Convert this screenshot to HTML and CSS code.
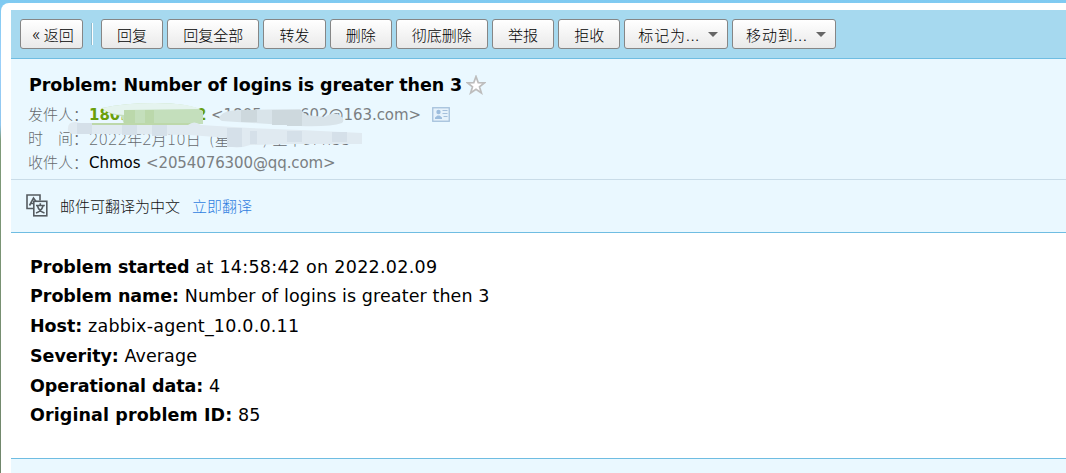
FILE: index.html
```html
<!DOCTYPE html>
<html lang="zh-CN">
<head>
    <meta charset="UTF-8">
    <title>Problem: Number of logins is greater then 3</title>
    <link rel="stylesheet" href="styles.css">
</head>
<body>
<div class="panel">
    <div class="toolbar">
        <a class="btn back"><span class="quote">«</span> 返回</a>
        <span class="line"></span>
        <a class="btn">回复</a>
        <a class="btn wide">回复全部</a>
        <a class="btn">转发</a>
        <a class="btn">删除</a>
        <a class="btn wide">彻底删除</a>
        <a class="btn">举报</a>
        <a class="btn">拒收</a>
        <a class="btn menu">标记为...<i class="arrow"></i></a>
        <a class="btn menu">移动到...<i class="arrow"></i></a>
    </div>

    <div class="info">
        <div class="subject">
            <b class="title">Problem: Number of logins is greater then 3</b>
            <svg class="star" width="20" height="20" viewBox="0 0 20 20">
                <path d="M10 1.5 12.2 7.6 18.6 7.8 13.5 11.7 15.4 18 10 14.3 4.6 18 6.5 11.7 1.4 7.8 7.8 7.6Z" fill="#fff" stroke="#bdbdbd" stroke-width="1.7"/>
            </svg>
        </div>
        <div class="row">
            <span class="label">发件人：</span>
            <b class="phone">180.</b><b class="tail">2</b>
            <span class="mail">&lt;1805</span><span class="mail from-end">602@163.com&gt;</span>
            <svg class="card" width="18" height="15" viewBox="0 0 18 15">
                <rect x=".75" y=".75" width="16.5" height="13.5" fill="#e6f2fb" stroke="#a5c0dc" stroke-width="1.3"/>
                <circle cx="6.5" cy="5" r="2.2" fill="#9dbddd"/>
                <path d="M3 12V10.5L5.5 8.5H7.5L10 10.5V12Z" fill="#9dbddd"/>
                <path d="M10.5 3.5H15.5M10.5 6.5H15.5M11.5 9.5H15.5" stroke="#a5c0dc"/>
            </svg>
        </div>
        <div class="row">
            <span class="label">时　间：</span>
            <span class="date">2022年2月10日</span><span class="week">(星</span><span class="time">) 上午9:4:33</span>
        </div>
        <div class="row">
            <span class="label">收件人：</span>
            <span class="name">Chmos</span>
            <span class="mail to">&lt;2054076300@qq.com&gt;</span>
        </div>
        <svg class="smear" width="360" height="50" viewBox="60 100 360 50">
            <path d="M102 108Q125 103 155 103Q190 103 203 111V124H124L121 116Q105 113 102 108Z" fill="#c4dfbc"/>
            <path d="M102 108Q125 103 155 103Q185 103 201 109L124 110V115Q108 114 102 108Z" fill="#e5f4ef"/>
            <path d="M124 110H135V124H124ZM145 110H154V124H145Z" fill="#bbd8ab"/>
            <path d="M92 123H194V126H92Z" fill="#bdd8aa"/>
            <path d="M68 128Q68 122 75 122L92 125H188Q194 120 201 125L250 128 300 130 362 133V144H285L250 145Q235 150 228 145V138L190 135 120 134 72 134Q67 132 68 128Z" fill="#e0eaf1"/>
            <path d="M77 123H92V134H77ZM122 125H137V135H122ZM152 125H167V136H152ZM227 128H242V147H227ZM250 131H257V144H250ZM287 131H302V142H287ZM332 132H347V142H332Z" fill="#d5e0e9"/>
            <path d="M220 116Q224 110 240 110L300 109 306 115 325 117Q331 112 338 114 346 119 342 123 330 127 300 126L222 121Q218 119 220 116Z" fill="#d9e4ea"/>
            <path d="M241 110H257V122H241ZM272 110H287V125H272ZM287 110H302V126H287Z" fill="#cdd8dd"/>
        </svg>
    </div>

    <div class="translate">
        <svg class="icon" width="22" height="23" viewBox="0 0 22 23" fill="none" stroke="#555b60" stroke-width="1.6">
            <path d="M7.5 14.5H1V1H14V6.5"/>
            <path d="M3.5 11.5 7.5 4 10 7.5M5 9.5H7.5"/>
            <rect x="7.8" y="7.3" width="13" height="14.5"/>
            <path d="M10 11.5H18.8M14.3 9.2V11.5M11.5 12C12.5 15.5 15 17.8 18.5 19M17 12C16 15.5 13.5 17.8 10 19"/>
        </svg>
        <span class="tip">邮件可翻译为中文</span>
        <a class="link">立即翻译</a>
    </div>

    <div class="content">
        <p class="l1"><b>Problem started</b> at 14:58:42 on 2022.02.09</p>
        <p class="l2"><b>Problem name:</b> Number of logins is greater then 3</p>
        <p class="l3"><b>Host:</b> zabbix-agent_10.0.0.11</p>
        <p class="l4"><b>Severity:</b> Average</p>
        <p class="l5"><b>Operational data:</b> 4</p>
        <p class="l6"><b>Original problem ID:</b> 85</p>
    </div>
    <div class="footer"></div>
</div>
</body>
</html>
```
FILE: styles.css
```css
*{padding: 0;margin: 0;box-sizing: border-box;}
body{
    height: 473px;
    padding: 3px 0 0 1px;
    overflow: hidden;
    background: linear-gradient(#7fcaf1 0, #9bd0fa 60px, #8fc6ee 125px, #7f9b79 140px, #70866b 473px);
    font-family: "DejaVu Sans", "Noto Sans CJK SC", sans-serif;
    font-size: 15px;
}
.panel{
    height: 470px;
    padding: 7px 0 0 10px;
    background: #fff;
    border-radius: 8px 0 0 0;
}

.toolbar{
    display: flex;
    gap: 4px;
    height: 49px;
    padding: 9px 0 0 9px;
    background: #a6d9ef;
    border-bottom: 1px solid #6fbde2;
}
.btn{
    width: 62.2px;
    height: 30px;
    line-height: 29px;
    text-align: center;
    white-space: nowrap;
    font-family: "Noto Sans CJK SC", sans-serif;
    font-weight: 300;
    border: 1px solid #868686;
    border-radius: 3px;
    background: linear-gradient(#fff, #e9e9e9);
    color: #000;
}
.btn.back{width: 63px;padding-left: 3px;}
.quote{font-size: 18px;line-height: 1;}
.btn.wide{width: 92.2px;}
.btn.menu{
    display: flex;
    align-items: center;
    width: 103.7px;
    padding-left: 13px;
    letter-spacing: 0.9px;
}
.arrow{
    margin-left: 8px;
    border: 5px solid transparent;
    border-top-color: #666;
    border-bottom: 0;
}
.line{
    width: 2px;
    height: 22px;
    margin: 4px 4px 0 4px;
    border-left: 1px solid #8eb9cc;
    background: #fff;
}

.info{
    position: relative;
    height: 121px;
    padding: 12px 0 0 17px;
    background: #eaf8ff;
    border-bottom: 1px solid #c9dce8;
}
.subject{
    display: flex;
    align-items: center;
    height: 28px;
    margin-bottom: 2px;
}
.title{
    width: 438px;
    padding-left: 1px;
    font-size: 17.5px;
    letter-spacing: -0.08px;
    white-space: nowrap;
}
.row{
    display: flex;
    align-items: center;
    height: 24px;
    white-space: nowrap;
    color: #7b7f82;
}
.label{
    width: 61px;
    font-family: "Noto Sans CJK SC", sans-serif;
    font-weight: 300;
    color: #666a6e;
}
.phone, .tail, .mail, .name{line-height: 20px;margin-top: 4px;}
.phone{width: 107px;color: #6a9f0c;}
.tail{width: 15px;color: #6a9f0c;}
.mail{width: 89px;}
.from-end{width: 132px;letter-spacing: -0.05px;}
.card{margin-top: 2px;}
.date, .week, .time{margin-top: 2px;font-weight: 300;color: #666a6e;}
.date{width: 120px;}
.week{width: 53px;}
.name{width: 57px;color: #000;}
.to{letter-spacing: -0.1px;}
.smear{
    position: absolute;
    left: 49px;
    top: 41px;
}

.translate{
    display: flex;
    align-items: center;
    height: 53px;
    padding: 0 0 1px 15px;
    background: #eaf8ff;
    border-bottom: 1px solid #6fbde2;
    font-family: "Noto Sans CJK SC", sans-serif;
    font-weight: 300;
    color: #111;
}
.tip{margin: 0 12px;}
.link{color: #2f7de0;}

.content{
    height: 225px;
    padding: 19.5px 0 0 19px;
    font-size: 17.5px;
}
.content p{
    height: 29.75px;
    line-height: 29.75px;
    white-space: nowrap;
    letter-spacing: 0.1px;
}
.content b{letter-spacing: -0.04px;}
.content .l1{letter-spacing: 0.28px;}
.content .l3{letter-spacing: 0.22px;}
.content .l6 b{letter-spacing: 0.1px;}
.footer{
    height: 15px;
    background: #eaf8ff;
    border-top: 1px solid #6fbde2;
}
```
